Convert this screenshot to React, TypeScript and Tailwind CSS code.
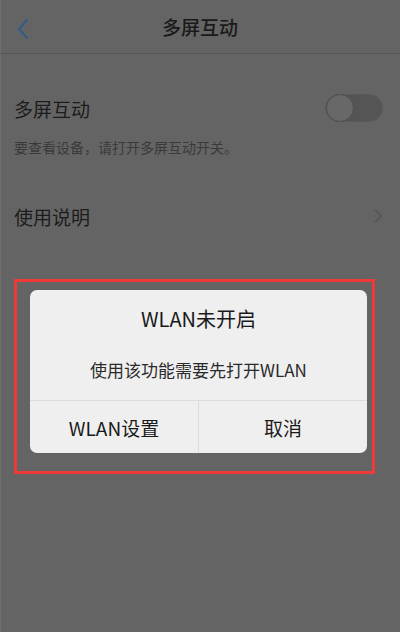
import React from "react";

export default function App() {
  const font = { fontFamily: '"Noto Sans CJK SC", "Noto Sans", sans-serif' };
  return (
    <div className="relative w-[400px] h-[632px] overflow-hidden bg-[#646464]" style={font}>
      <div className="absolute left-0 top-0 h-full w-[1px] bg-[#707070]" />
      {/* header */}
      <div className="relative flex h-[54px] items-center justify-center border-b border-[#585858]">
        <svg className="absolute left-[16px] top-[18px]" width="14" height="22" viewBox="0 0 14 22">
          <polyline points="11,2 3,11 11,20" fill="none" stroke="#2f5d8a" strokeWidth="2" strokeLinecap="round" strokeLinejoin="round" />
        </svg>
        <span className="text-[19px] font-medium text-[#1a1a1a] leading-none">多屏互动</span>
      </div>
      {/* row 1 */}
      <div className="mt-[26px] flex h-[56px] items-center justify-between pl-[14px] pr-[17px]">
        <span className="text-[19px] text-[#1c1c1c] leading-none">多屏互动</span>
        <div className="relative h-[28px] w-[58px] rounded-full bg-[#555555] border border-[#5a5a5a]">
          <div className="absolute left-0 top-[-1px] h-[28px] w-[28px] rounded-full bg-[#686868] border border-[#505050]" />
        </div>
      </div>
      <div className="mt-[1px] flex h-[20px] items-center pl-[14px]">
        <span className="text-[14px] text-[#3a3a3a] leading-none">要查看设备，请打开多屏互动开关。</span>
      </div>
      {/* row 2 */}
      <div className="mt-[31px] flex h-[56px] items-center justify-between pl-[14px] pr-[18px]">
        <span className="text-[19px] text-[#1c1c1c] leading-none">使用说明</span>
        <svg width="8" height="14" viewBox="0 0 8 14">
          <polyline points="1,1 7,7 1,13" fill="none" stroke="#555555" strokeWidth="1.6" />
        </svg>
      </div>

      {/* red highlight */}
      <div className="absolute left-[14px] top-[279px] h-[195px] w-[361px] border-[3px] border-[#f03a3a]" />
      {/* dialog */}
      <div className="absolute left-[30px] top-[290px] flex h-[163px] w-[337px] flex-col rounded-[7px] bg-[#efefef]">
        <div className="flex h-[58px] items-center justify-center">
          <span className="text-[20px] text-[#1a1a1a] leading-none">WLAN未开启</span>
        </div>
        <div className="flex h-[52px] items-start justify-center pt-[13px]">
          <span className="text-[17px] text-[#2a2a2a] leading-none">使用该功能需要先打开WLAN</span>
        </div>
        <div className="flex flex-1 border-t border-[#dcdcdc]">
          <div className="flex flex-1 items-center justify-center border-r border-[#dcdcdc]">
            <span className="text-[19px] text-[#1a1a1a] leading-none">WLAN设置</span>
          </div>
          <div className="flex flex-1 items-center justify-center">
            <span className="text-[19px] text-[#1a1a1a] leading-none">取消</span>
          </div>
        </div>
      </div>
    </div>
  );
}
